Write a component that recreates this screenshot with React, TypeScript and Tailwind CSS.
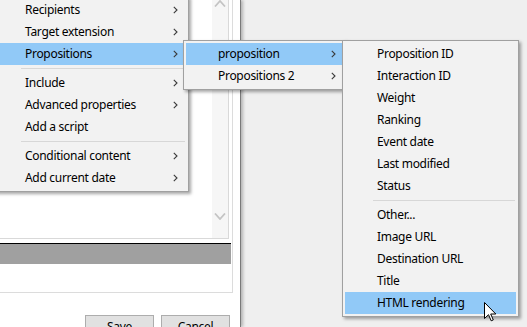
import React from "react";

type Item = { label: string; arrow?: boolean; active?: boolean } | { sep: true };

const Chevron = () => (
  <svg width="5" height="8" viewBox="0 0 5 8" className="shrink-0">
    <path d="M0.8 0.8 L4 4 L0.8 7.2" fill="none" stroke="#3a3a3a" strokeWidth="1.1" />
  </svg>
);

function Menu({ items, className }: { items: Item[]; className: string }) {
  return (
    <div
      className={
        "absolute bg-[#f2f2f2] border border-[#a0a0a0] p-[2px] shadow-[2px_2px_3px_rgba(0,0,0,0.35)] " +
        className
      }
    >
      {items.map((it, i) =>
        "sep" in it ? (
          <div key={i} className="h-[7px] flex items-center pl-[28px] pr-[1px]">
            <div className="h-px w-full bg-[#d7d7d7]" />
          </div>
        ) : (
          <div
            key={i}
            className={
              "h-[22px] flex items-center pl-[32px] pr-[8px] text-[12px] tracking-[-0.3px] text-black whitespace-nowrap " +
              (it.active ? "bg-[#91c9f7]" : "")
            }
          >
            <span className="flex-1">{it.label}</span>
            {it.arrow && <Chevron />}
          </div>
        )
      )}
    </div>
  );
}

export default function App() {
  const menu1: Item[] = [
    { label: "Recipients", arrow: true },
    { label: "Target extension", arrow: true },
    { label: "Propositions", arrow: true, active: true },
    { sep: true },
    { label: "Include", arrow: true },
    { label: "Advanced properties", arrow: true },
    { label: "Add a script" },
    { sep: true },
    { label: "Conditional content", arrow: true },
    { label: "Add current date", arrow: true },
  ];
  const menu2: Item[] = [
    { label: "proposition", arrow: true, active: true },
    { label: "Propositions 2", arrow: true },
  ];
  const menu3: Item[] = [
    { label: "Proposition ID" },
    { label: "Interaction ID" },
    { label: "Weight" },
    { label: "Ranking" },
    { label: "Event date" },
    { label: "Last modified" },
    { label: "Status" },
    { sep: true },
    { label: "Other..." },
    { label: "Image URL" },
    { label: "Destination URL" },
    { label: "Title" },
    { label: "HTML rendering", active: true },
  ];

  return (
    <div
      className="relative w-[527px] h-[327px] overflow-hidden bg-[#efefef] flex"
      style={{ fontFamily: '"Noto Sans", "Open Sans", sans-serif' }}
    >
      {/* dialog */}
      <div className="w-[241px] h-full bg-white border-r border-[#7a7a7a] shadow-[2px_0_3px_rgba(0,0,0,0.25)] flex flex-col shrink-0">
        <div className="w-[233px] h-[293px] border-r border-b border-[#dcdcdc] flex flex-col shrink-0">
          <div className="w-[229px] h-[239px] border-r border-b border-[#d9d9d9] flex shrink-0">
            <div className="flex-1 bg-white" />
            <div className="w-[16px] bg-[#f6f6f6] flex flex-col justify-between items-center pb-[18px]">
              <svg width="12" height="7" viewBox="0 0 12 7">
                <path d="M1 6.5 L6 1 L11 6.5" fill="none" stroke="#c4c4c4" strokeWidth="1.8" />
              </svg>
              <svg width="12" height="7" viewBox="0 0 12 7">
                <path d="M1 0.5 L6 6 L11 0.5" fill="none" stroke="#c4c4c4" strokeWidth="1.8" />
              </svg>
            </div>
          </div>
          <div className="mt-[4px] w-[231px] h-[21px] border-t border-black bg-[#a0a0a0] shrink-0" />
        </div>
        <div className="flex gap-[7px] pl-[85px] mt-[22px]">
          <div className="w-[69px] h-[23px] bg-[#e1e1e1] border border-[#adadad] flex items-center justify-center text-[12px] tracking-[-0.3px] text-black">
            Save
          </div>
          <div className="w-[69px] h-[23px] bg-[#e1e1e1] border border-[#adadad] flex items-center justify-center text-[12px] tracking-[-0.3px] text-black">
            Cancel
          </div>
        </div>
      </div>
      <div className="flex-1" />

      <Menu items={menu1} className="left-[-10px] top-[-4px] w-[199px] z-10" />
      <Menu items={menu2} className="left-[183px] top-[40px] w-[164px] z-20" />
      <Menu items={menu3} className="left-[342px] top-[40px] w-[177px] z-30" />

      {/* cursor */}
      <svg
        width="13"
        height="20"
        viewBox="0 0 13 20"
        className="absolute left-[484px] top-[302px] z-40"
      >
        <path
          d="M0.5 0.5 L0.5 16.5 L4.5 12.7 L7.2 18.8 L9.3 17.9 L6.7 12 L11.8 12 Z"
          fill="white"
          stroke="black"
          strokeWidth="1"
          strokeLinejoin="miter"
        />
      </svg>
    </div>
  );
}
